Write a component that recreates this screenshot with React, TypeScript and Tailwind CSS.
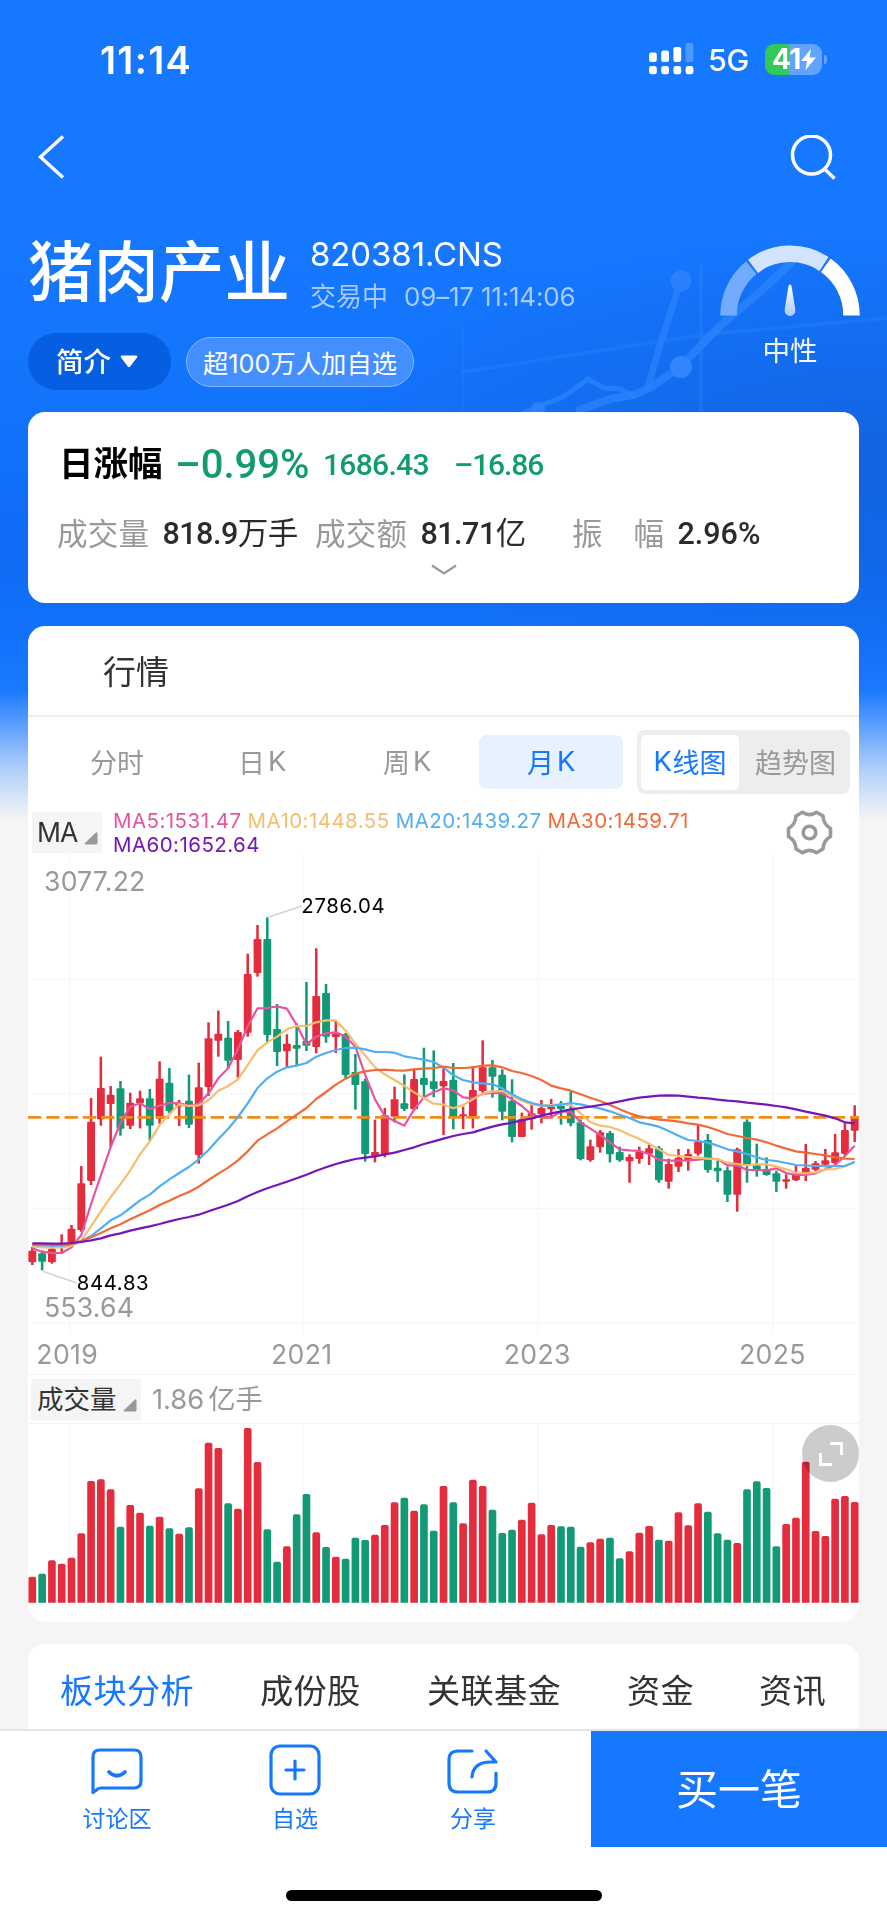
import type { ReactNode } from "react";

// [up, high, body top, body bottom, low]
type Candle = [number, number, number, number, number];

const candles: Candle[] = [
  [1, 1401, 1412, 1447, 1455], [0, 1412, 1420, 1445, 1471], [1, 1398, 1406, 1447, 1451],
  [1, 1363, 1391, 1398, 1420], [1, 1335, 1346, 1388, 1393], [1, 1158, 1210, 1350, 1355],
  [1, 954, 1025, 1203, 1215], [1, 830, 924, 1018, 1037], [1, 918, 944, 972, 1101],
  [0, 903, 925, 1046, 1067], [1, 938, 968, 1037, 1047], [1, 932, 955, 970, 1045],
  [0, 927, 955, 1037, 1082], [1, 844, 896, 1016, 1031], [0, 864, 908, 993, 999],
  [1, 960, 971, 979, 1038], [0, 884, 962, 1034, 1044], [1, 848, 922, 1125, 1151],
  [1, 727, 775, 921, 948], [1, 692, 761, 782, 830], [0, 723, 773, 842, 865],
  [1, 750, 756, 840, 893], [1, 521, 582, 758, 770], [1, 435, 477, 579, 590],
  [0, 412, 477, 765, 790], [0, 672, 747, 816, 858], [1, 763, 791, 814, 862],
  [0, 730, 795, 806, 855], [0, 606, 783, 797, 813], [1, 505, 648, 801, 820],
  [0, 612, 639, 770, 788], [1, 722, 761, 771, 819], [0, 759, 763, 885, 895],
  [0, 822, 876, 915, 989], [0, 896, 904, 1122, 1145], [1, 1019, 1116, 1129, 1147],
  [1, 984, 1006, 1123, 1132], [1, 920, 958, 1010, 1027], [0, 883, 970, 987, 993],
  [1, 866, 897, 988, 992], [0, 803, 894, 915, 950], [0, 811, 904, 927, 952],
  [1, 864, 903, 919, 1065], [0, 849, 899, 1011, 1048], [1, 980, 1003, 1009, 1047],
  [1, 859, 930, 1011, 1045], [1, 781, 862, 933, 940], [0, 840, 862, 890, 953],
  [0, 868, 884, 995, 1021], [0, 898, 962, 1071, 1087], [1, 998, 1017, 1071, 1071],
  [1, 972, 1000, 1018, 1049], [1, 960, 984, 1003, 1030], [1, 957, 980, 988, 1008],
  [0, 963, 977, 988, 1034], [0, 934, 988, 1030, 1039], [0, 1018, 1027, 1137, 1141],
  [1, 1079, 1099, 1140, 1145], [1, 1050, 1057, 1102, 1118], [0, 1053, 1059, 1123, 1147],
  [0, 1100, 1116, 1141, 1145], [1, 1123, 1131, 1144, 1208], [1, 1100, 1115, 1137, 1151],
  [1, 1094, 1105, 1121, 1155], [0, 1098, 1105, 1201, 1208], [1, 1136, 1152, 1205, 1226],
  [1, 1107, 1133, 1160, 1176], [1, 1107, 1122, 1142, 1172], [1, 1032, 1085, 1121, 1127],
  [0, 1062, 1080, 1170, 1178], [0, 1142, 1163, 1174, 1206], [0, 1160, 1171, 1244, 1266],
  [1, 1103, 1108, 1244, 1295], [0, 1018, 1025, 1158, 1208], [0, 1091, 1156, 1170, 1190],
  [0, 1132, 1168, 1185, 1187], [0, 1172, 1180, 1205, 1236], [1, 1183, 1198, 1205, 1226],
  [1, 1158, 1183, 1201, 1203], [1, 1092, 1163, 1177, 1203], [1, 1143, 1150, 1169, 1173],
  [1, 1107, 1141, 1154, 1162], [1, 1062, 1117, 1149, 1152], [1, 1025, 1050, 1121, 1127],
  [1, 976, 1010, 1052, 1086],
];

const volumes = [
  740, 731, 691, 701, 683, 610, 453, 448, 478, 590, 525, 548, 587, 560, 595, 611, 592,
  475, 338, 354, 520, 536, 294, 396, 598, 695, 649, 553, 492, 607, 651, 680, 686, 623,
  630, 614, 585, 517, 503, 542, 523, 602, 468, 517, 580, 449, 468, 539, 609, 599, 569,
  518, 613, 585, 589, 590, 650, 637, 626, 623, 685, 664, 608, 588, 629, 632, 547, 586,
  520, 545, 610, 629, 639, 478, 454, 474, 649, 582, 563, 395, 603, 618, 506, 498, 516,
];

const volumeColors = [
  "R", "G", "R", "R", "R", "R", "R", "R", "R", "G", "R", "R", "G", "R", "G", "R", "G",
  "R", "R", "R", "G", "R", "R", "R", "G", "G", "R", "G", "G", "R", "G", "R", "G", "G",
  "G", "R", "R", "R", "G", "R", "G", "G", "R", "G", "R", "R", "R", "G", "G", "G", "R",
  "R", "R", "R", "G", "G", "G", "R", "R", "G", "G", "R", "R", "R", "G", "R", "R", "R",
  "R", "G", "G", "G", "R", "G", "G", "G", "G", "R", "R", "R", "R", "R", "R", "R", "R",
];

const ma5 = [
  1405, 1415, 1419, 1419, 1402, 1365, 1272, 1186, 1101, 1029, 980, 970, 987, 977, 969, 970,
  977, 972, 940, 895, 865, 807, 739, 685, 684, 679, 686, 735, 793, 770, 760, 757, 770, 800,
  885, 958, 1008, 1023, 1037, 988, 952, 937, 925, 931, 952, 955, 942, 939, 940, 958, 978,
  1004, 1012, 1012, 995, 995, 1027, 1046, 1065, 1087, 1108, 1111, 1113, 1122, 1139, 1142,
  1142, 1141, 1139, 1136, 1137, 1156, 1156, 1170, 1170, 1171, 1165, 1179, 1185, 1185, 1180,
  1168, 1155, 1128, 1097,
];
const ma10 = [
  1399, 1402, 1403, 1402, 1398, 1381, 1339, 1294, 1251, 1213, 1171, 1123, 1084, 1035, 1003,
  973, 978, 976, 961, 932, 918, 898, 855, 811, 787, 770, 748, 738, 738, 727, 721, 721, 752,
  791, 826, 862, 883, 900, 918, 937, 955, 971, 974, 985, 975, 958, 941, 934, 933, 947, 962,
  973, 977, 975, 973, 975, 1000, 1027, 1037, 1041, 1051, 1064, 1077, 1091, 1108, 1125, 1128,
  1131, 1133, 1136, 1138, 1148, 1152, 1156, 1153, 1153, 1159, 1168, 1178, 1180, 1177, 1168,
  1167, 1159, 1145,
];
const ma20 = [
  1395, 1396, 1397, 1397, 1393, 1383, 1368, 1345, 1321, 1306, 1284, 1261, 1244, 1219, 1198,
  1179, 1161, 1138, 1110, 1077, 1047, 1011, 970, 924, 895, 875, 862, 857, 849, 830, 819, 810,
  804, 803, 808, 816, 816, 818, 829, 834, 839, 846, 863, 886, 900, 907, 910, 913, 925, 943,
  958, 969, 976, 978, 973, 969, 973, 980, 985, 994, 1004, 1014, 1027, 1033, 1040, 1053, 1067,
  1080, 1083, 1088, 1097, 1108, 1114, 1122, 1132, 1140, 1143, 1149, 1155, 1156, 1158, 1158,
  1158, 1158, 1146,
];
const ma30 = [
  1393, 1394, 1395, 1395, 1392, 1384, 1372, 1359, 1345, 1333, 1318, 1304, 1291, 1275, 1262,
  1248, 1236, 1220, 1200, 1181, 1163, 1141, 1114, 1082, 1063, 1045, 1024, 1004, 984, 957,
  936, 914, 896, 881, 874, 870, 869, 871, 872, 868, 866, 864, 860, 864, 864, 862, 857, 856,
  862, 873, 879, 888, 900, 917, 925, 932, 943, 953, 963, 975, 988, 1000, 1009, 1014, 1019,
  1021, 1025, 1030, 1034, 1041, 1051, 1062, 1068, 1074, 1079, 1087, 1097, 1106, 1114, 1118,
  1122, 1126, 1132, 1136, 1137,
];
const ma60 = [
  1390, 1390, 1391, 1391, 1389, 1386, 1381, 1375, 1366, 1360, 1352, 1345, 1339, 1332, 1324,
  1317, 1311, 1304, 1294, 1284, 1274, 1263, 1249, 1236, 1225, 1215, 1205, 1195, 1184, 1172,
  1162, 1152, 1144, 1137, 1133, 1129, 1123, 1118, 1110, 1102, 1092, 1084, 1076, 1068, 1062,
  1057, 1048, 1040, 1033, 1028, 1021, 1015, 1007, 1000, 994, 988, 984, 980, 975, 970, 964,
  958, 953, 950, 947, 946, 947, 950, 953, 955, 959, 962, 964, 968, 971, 974, 978, 982, 988,
  995, 1001, 1007, 1015, 1027, 1030,
];

const RED = "#e52c3c";
const GREEN = "#119a75";

const xAt = (i: number) => 13 + i * 29.37;
const line = (values: number[]) => values.map((v, i) => `${xAt(i).toFixed(1)},${v}`).join(" ");

const averages = [
  { values: ma5, color: "#e8539f" },
  { values: ma10, color: "#f7bd6c" },
  { values: ma20, color: "#50aef4" },
  { values: ma30, color: "#f26a38" },
  { values: ma60, color: "#7517b8" },
];

const years = [
  { label: "2019", x: 25 },
  { label: "2021", x: 729 },
  { label: "2023", x: 1427 },
  { label: "2025", x: 2133 },
];

function StatusBar() {
  return (
    <div className="flex h-[98px] items-center pt-[22px] pl-[100px] pr-[60px] text-white">
      <span className="mb-[1px] text-[38px] leading-none font-semibold tracking-[1.300px]">11:14</span>
      <svg className="mb-[2px] ml-auto" width="45" height="32" viewBox="0 0 45 32" fill="#fff">
        <rect x="0" y="9.5" width="7.8" height="9.5" rx="2.2" />
        <rect x="12.2" y="7.5" width="7.8" height="11.5" rx="2.2" />
        <rect x="24.4" y="4" width="7.8" height="15" rx="2.2" />
        <rect x="36.6" y="0" width="7.8" height="19" rx="2.2" opacity="0.25" />
        <rect x="0" y="23" width="7.8" height="8.3" rx="2.4" />
        <rect x="12.2" y="23" width="7.8" height="8.3" rx="2.4" />
        <rect x="24.4" y="23" width="7.8" height="8.3" rx="2.4" />
        <rect x="36.6" y="23" width="7.8" height="8.3" rx="2.4" />
      </svg>
      <span className="ml-[14px] w-[42px] text-[30.500px] leading-none font-medium tracking-[-0.300px]">5G</span>
      <div className="mb-[2px] ml-[15px] flex h-[31px] w-[57px] items-center overflow-hidden rounded-[9px] bg-[linear-gradient(90deg,#34c759_0_24px,#63a3ff_24px)] pl-[7px]">
        <span className="text-[28px] leading-none font-bold tracking-[-0.5px]">41</span>
        <svg width="15" height="21" viewBox="0 0 15 21" fill="#fff">
          <path d="M10 0 0 12h6L4.500 21 15 8.500H8.500Z" />
        </svg>
      </div>
      <div className="mb-[2px] ml-[2px] h-[9px] w-[3px] rounded-r-full bg-[#63a3ff]" />
    </div>
  );
}

function Gauge() {
  return (
    <div className="flex w-[140px] flex-col items-center">
      <svg width="140" height="71" viewBox="0 0 140 71" fill="none">
        <defs>
          <linearGradient id="needle" x1="0" y1="0" x2="0" y2="1">
            <stop offset="0" stopColor="#fff" />
            <stop offset="1" stopColor="#a9cbff" />
          </linearGradient>
        </defs>
        <path d="M8.500 70.500A61.500 61.500 0 0 1 31.300 22.700" stroke="#73acff" strokeWidth="16.500" />
        <path d="M33 21.300A61.500 61.500 0 0 1 104 19" stroke="#d2e4ff" strokeWidth="16.500" />
        <path d="M105.800 20.300A61.500 61.500 0 0 1 131.500 70.500" stroke="#fff" strokeWidth="16.500" />
        <path d="M70 39.500c1 0 1.500 1 1.700 2.500l3.600 22.500a5.400 5.400 0 1 1-10.600 0L68.300 42c.2-1.500.7-2.500 1.700-2.500Z" fill="url(#needle)" />
      </svg>
      <span className="mt-[22px] text-[27.500px] leading-none text-[#f4f9ff]">中性</span>
    </div>
  );
}

function HeroBackdrop() {
  return (
    <>
      <div className="absolute inset-x-0 top-0 h-[830px] bg-[linear-gradient(180deg,#1677ff_0,#1677ff_230px,#1273fb_400px,#0f6cf4_560px,#1273fa_640px,#1a79ff_690px,#5c9eff_725px,#a9cbfa_765px,#dbe7f7_800px,#f5f5f5_822px)]" />
      <div className="absolute top-[230px] right-0 h-[460px] w-[560px] bg-[radial-gradient(ellipse_at_100%_50%,rgba(18,96,216,0.75),rgba(18,96,216,0)_70%)]" />
      <svg className="absolute top-[230px] left-0" width="887" height="400" viewBox="0 230 887 400" fill="none">
        <g stroke="#3389ff" strokeLinecap="round" opacity="0.75">
          <path d="M463 372 700 335 887 318" strokeWidth="4" opacity="0.35" />
          <path d="M701 265V412" strokeWidth="4" opacity="0.35" />
          <path d="M463 330V412" strokeWidth="2" opacity="0.3" />
          <path d="M525 412 563 397 588 379 604 388 620 389 634 396" strokeWidth="5" opacity="0.8" />
          <path d="M580 410 610 399 634 395 650 388 680 367 720 326 760 292 792 262" strokeWidth="8" opacity="0.8" />
          <path d="M648 387 660 345 681 280" strokeWidth="7" opacity="0.7" />
        </g>
        <circle cx="681" cy="281" r="10.500" fill="#2b80fb" />
        <circle cx="681" cy="367" r="11" fill="#3186ff" />
        <circle cx="538" cy="409" r="7" fill="#3186ff" opacity="0.7" />
      </svg>
    </>
  );
}

function Hero() {
  return (
    <div className="relative">
      <div className="flex h-[118px] items-start justify-between pt-[37px] pr-[49px] pl-[38px]">
        <svg width="28" height="44" viewBox="0 0 28 44" fill="none" stroke="#fff" strokeWidth="3.400">
          <path d="M25 1.500 2.500 22 25 42.500" />
        </svg>
        <svg width="48" height="48" viewBox="0 0 48 48" fill="none" stroke="#fff" strokeWidth="3.500">
          <circle cx="21.500" cy="20" r="19" />
          <path d="M34.500 34 44.500 43.500" />
        </svg>
      </div>

      <div className="flex h-[117px] items-start pr-[27px] pl-[28px]">
        <h1 className="mt-[24px] w-[282px] text-[65.500px] leading-none font-medium whitespace-nowrap text-white">猪肉产业</h1>
        <div className="flex flex-col whitespace-nowrap">
          <span className="mt-[22px] text-[33px] leading-none tracking-[-0.100px] text-white">820381.CNS</span>
          <span className="mt-[13px] text-[26px] leading-none text-[#a5caff]">
            交易中<span className="ml-[16px] tracking-[-0.200px]">09–17 11:14:06</span>
          </span>
        </div>
        <div className="mt-[29px] ml-auto">
          <Gauge />
        </div>
      </div>

      <div className="flex h-[79px] items-start pl-[28px] text-white">
        <div className="flex h-[57px] w-[143px] items-center rounded-full bg-[#065fe0] pt-[2px] pl-[28px] text-[27.500px] leading-none font-medium">
          简介
          <svg className="mb-[2px] ml-[9px]" width="18" height="13" viewBox="0 0 18 13" fill="#fff">
            <path d="M1.500.5h15q1.500.5.5 2L10 11.800q-1 .9-2 0L1 2.500Q0 1 1.500.5Z" />
          </svg>
        </div>
        <div className="mt-[4px] ml-[15px] flex h-[50px] w-[228px] items-center justify-center rounded-full border border-[#86b8ff] bg-[#448fff] pt-[3px] text-[25.300px] leading-none whitespace-nowrap">
          超100万人加自选
        </div>
      </div>
    </div>
  );
}

function Stat({ label, children, className }: { label: string; children: ReactNode; className: string }) {
  return (
    <div className={`flex items-center whitespace-nowrap ${className}`}>
      <span className="text-[30.500px] leading-none tracking-[0.300px] text-[#999]">{label}</span>
      <span className="ml-[13px] font-['Roboto','Noto_Sans_CJK_SC',sans-serif] text-[30.500px] leading-none tracking-[-0.500px] text-[#2b2b2b]">
        {children}
      </span>
    </div>
  );
}

function Quote() {
  return (
    <div className="relative mx-[28px] h-[191px] rounded-[17px] bg-white">
      <div className="flex h-[105px] items-center pl-[31px] font-['Roboto','Noto_Sans_CJK_SC',sans-serif] whitespace-nowrap text-[#129a70]">
        <span className="w-[116px] text-[34.500px] leading-none font-bold text-black">日涨幅</span>
        <span className="w-[148px] text-[40px] leading-none font-medium">–0.99%</span>
        <span className="w-[131px] text-[30px] leading-none font-medium tracking-[-0.700px]">1686.43</span>
        <span className="text-[30px] leading-none font-medium tracking-[-1.100px]">–16.86</span>
      </div>
      <div className="flex h-[34px] items-center pl-[29px]">
        <Stat label="成交量" className="w-[258px]">
          <b className="font-medium">818.9</b>万手
        </Stat>
        <Stat label="成交额" className="w-[257px]">
          <b className="font-medium">81.71</b>亿
        </Stat>
        <Stat label="振　幅" className="">
          <b className="font-medium tracking-normal">2.96%</b>
        </Stat>
      </div>
      <svg className="mx-auto mt-[13px]" width="26" height="12" viewBox="0 0 26 12" fill="none" stroke="#999" strokeWidth="2.200">
        <path d="M1 1.500 13 9.500 25 1.500" />
      </svg>
    </div>
  );
}

function K() {
  return <span className="mb-[2px] font-['Roboto',sans-serif] text-[28.500px]">K</span>;
}

function PeriodTabs() {
  return (
    <div className="flex h-[95px] items-start pt-[13px] pl-[17px] text-[27px] leading-none">
      <div className="mt-[5px] flex text-[#999]">
        <span className="flex h-[54px] w-[144px] items-center justify-center pt-[2px]">分时</span>
        <span className="flex h-[54px] w-[146px] items-center justify-center gap-[3px] pt-[2px]">日<K /></span>
        <span className="flex h-[54px] w-[144px] items-center justify-center gap-[3px] pt-[2px]">周<K /></span>
        <span className="flex h-[54px] w-[144px] items-center justify-center gap-[3px] rounded-[8px] bg-[#e7f1ff] pt-[2px] text-[#1677ff]">
          月<K />
        </span>
      </div>
      <div className="ml-[14px] flex h-[64px] w-[213px] items-center rounded-[8px] bg-[#ededed] pl-[4px] whitespace-nowrap">
        <span className="flex h-[55px] w-[98px] items-center justify-center gap-[1px] rounded-[5px] bg-white pt-[2px] text-[#1677ff]">
          <K />线图
        </span>
        <span className="flex flex-1 items-center justify-center pt-[2px] pl-[2px] text-[#999]">趋势图</span>
      </div>
    </div>
  );
}

function Corner({ className }: { className: string }) {
  return (
    <svg className={className} width="14" height="13" viewBox="0 0 14 13" fill="#999">
      <path d="M12 .5q1.500-.8 1.500 1V11q0 1.500-1.500 1.500H1.500Q-.2 12.200 1 11Z" />
    </svg>
  );
}

function Legend() {
  return (
    <div className="flex h-[41px] items-start">
      <div className="ml-[4px] flex h-[41px] w-[70px] items-center bg-[#f5f5f5] pl-[5px] text-[26.500px] leading-none tracking-[-0.900px] text-[#333]">
        MA
        <Corner className="mt-[12px] ml-auto mr-[4px]" />
      </div>
      <div className="ml-[11px] w-[650px] text-[20.500px] leading-[24px] tracking-[0.450px] whitespace-nowrap">
        <div className="-mt-[3px] flex gap-[6px]">
          <span className="text-[#e8539f]">MA5:1531.47</span>
          <span className="text-[#f7bd6c]">MA10:1448.55</span>
          <span className="text-[#50aef4]">MA20:1439.27</span>
          <span className="text-[#f26a38]">MA30:1459.71</span>
        </div>
        <div className="text-[#7517b8]">MA60:1652.64</div>
      </div>
      <svg className="-mt-[3px] ml-auto mr-[26px]" width="47" height="47" viewBox="0 0 47 47" fill="none" stroke="#999" strokeWidth="3.600" strokeLinejoin="round">
        <circle cx="23.500" cy="23.500" r="6.300" />
        <path d="M16.500 3.300Q23.500 8 30.500 3.300L37 7Q37.500 15.500 44.500 19.500V27.500Q37.500 31.500 37 40L30.500 43.700Q23.500 39 16.500 43.700L10 40Q9.500 31.500 2.500 27.500V19.500Q9.500 15.500 10 7Z" />
      </svg>
    </div>
  );
}

function PriceChart() {
  return (
    <svg className="block" width="831" height="521" viewBox="0 219 2493 1563" fill="none">
      <g stroke="#f7f7f7" strokeWidth="4">
        {[598, 941, 1285, 1629].map((y) => (
          <path key={y} d={`M0 ${y}H2493`} />
        ))}
        {[125, 825, 1530, 2235].map((x) => (
          <path key={x} d={`M${x} 219V1660`} />
        ))}
      </g>
      {candles.map(([up, high, top, bottom, low], i) => (
        <g key={i} fill={up ? RED : GREEN}>
          <rect x={xAt(i) - 3.8} y={high} width="7.600" height={low - high} />
          <rect x={xAt(i) - 11.8} y={top} width="23.600" height={Math.max(bottom - top, 6)} rx="3" />
        </g>
      ))}
      <path d="M0 1012H2493" stroke="#f28c1a" strokeWidth="8" strokeDasharray="40 14.800" />
      {averages.map(({ values, color }) => (
        <polyline key={color} points={line(values)} stroke={color} strokeWidth="6.600" strokeLinejoin="round" />
      ))}
      <path d="M720 412 821 378M44 1474 146 1509" stroke="#d4d4d4" strokeWidth="5" />
      <g fill="#000" fontSize="61" letterSpacing="2">
        <text x="820" y="398">2786.04</text>
        <text x="146" y="1530">844.83</text>
      </g>
      <g fill="#999" fontSize="80">
        <text x="48" y="332" letterSpacing="0.500">3077.22</text>
        <text x="48" y="1611" letterSpacing="0.500">553.64</text>
        {years.map(({ label, x }) => (
          <text key={label} x={x} y="1752" letterSpacing="1">{label}</text>
        ))}
      </g>
    </svg>
  );
}

function VolumeChart() {
  return (
    <div className="relative h-[179px]">
      <svg className="block" width="831" height="179" viewBox="0 282 2493 537" fill="none">
        <path d="M125 282V818M825 282V818M1530 282V818M2235 282V818" stroke="#f7f7f7" strokeWidth="4" />
        {volumes.map((top, i) => (
          <path
            key={i}
            d={`M${xAt(i) - 11.5} 818V${top + 4}l4-4h15l4 4V818Z`}
            fill={volumeColors[i] === "R" ? RED : GREEN}
          />
        ))}
      </svg>
      <div className="absolute top-[1px] right-0 flex size-[57px] items-center justify-center rounded-full bg-black/20">
        <svg width="24" height="24" viewBox="0 0 24 24" fill="none" stroke="#fff" strokeWidth="2.800">
          <path d="M11 1.500H22.500V13M1.500 11V22.500H13" />
        </svg>
      </div>
    </div>
  );
}

function Market() {
  return (
    <div className="relative mx-[28px] mt-[23px] h-[996px] overflow-hidden rounded-[17px] bg-white">
      <div className="flex h-[91px] items-center border-b-2 border-[#eeeeee] pt-[3px] pl-[75px] text-[33px] leading-none text-[#333]">行情</div>
      <PeriodTabs />
      <Legend />
      <PriceChart />
      <div className="flex h-[50px] items-center border-y border-[#f3f3f3]">
        <div className="mt-[1px] ml-[3px] flex h-[41px] w-[110px] items-center bg-[#f5f5f5] pl-[6px] text-[26.500px] leading-none text-[#333]">
          成交量
          <Corner className="mt-[12px] ml-auto mr-[4px]" />
        </div>
        <span className="mt-[2px] ml-[11px] text-[27.300px] leading-none text-[#999]">
          1.86<span className="ml-[4px]">亿手</span>
        </span>
      </div>
      <VolumeChart />
    </div>
  );
}

function SectionTabs() {
  return (
    <div className="mx-[28px] mt-[22px] flex h-[85px] items-center rounded-t-[17px] bg-white pt-[10px] pl-[32px] text-[33.200px] leading-none tracking-[0.300px] whitespace-nowrap text-[#333]">
      <span className="w-[200px] text-[#1677ff]">板块分析</span>
      <span className="w-[167px]">成份股</span>
      <span className="w-[200px]">关联基金</span>
      <span className="w-[132px]">资金</span>
      <span>资讯</span>
    </div>
  );
}

function Action({ label, children }: { label: string; children: ReactNode }) {
  return (
    <div className="flex w-[178px] flex-col items-center text-[#1677ff]">
      <svg width="52" height="52" viewBox="0 0 52 52" fill="none" stroke="currentColor" strokeWidth="3.200" strokeLinecap="round" strokeLinejoin="round">
        {children}
      </svg>
      <span className="mt-[12px] text-[23px] leading-none">{label}</span>
    </div>
  );
}

function BottomBar() {
  return (
    <div className="h-[191px] border-t-2 border-[#e4e4e4] bg-white">
      <div className="flex h-[116px]">
        <div className="flex flex-1 items-start pt-[13px] pl-[28px]">
          <Action label="讨论区">
            <path d="M2 48.500V13q0-7 7-7h34q7 0 7 7v24q0 7-7 7H10q-3 0-4.500 2Z" />
            <path d="M18 28q8 7.500 16 0" strokeWidth="3.600" />
          </Action>
          <Action label="自选">
            <rect x="2" y="2" width="48" height="48" rx="9" />
            <path d="M26 17V35M17 26H35" />
          </Action>
          <Action label="分享">
            <path d="M25 7H11q-9 0-9 9v23q0 9 9 9h29q9 0 9-9V29" />
            <path d="M39 7 49 18H44Q26 18 25 33" />
          </Action>
        </div>
        <div className="flex w-[296px] items-center justify-center bg-[#1677ff] pt-[1px] text-[42px] leading-none text-white">买一笔</div>
      </div>
      <div className="mx-auto mt-[43px] h-[11px] w-[316px] rounded-full bg-black" />
    </div>
  );
}

export default function App() {
  return (
    <div className="relative h-[1920px] w-[887px] overflow-hidden bg-[#f5f5f5] font-['Inter','Noto_Sans_CJK_SC',sans-serif]">
      <HeroBackdrop />
      <div className="relative">
        <StatusBar />
        <Hero />
        <Quote />
        <Market />
        <SectionTabs />
        <BottomBar />
      </div>
    </div>
  );
}
